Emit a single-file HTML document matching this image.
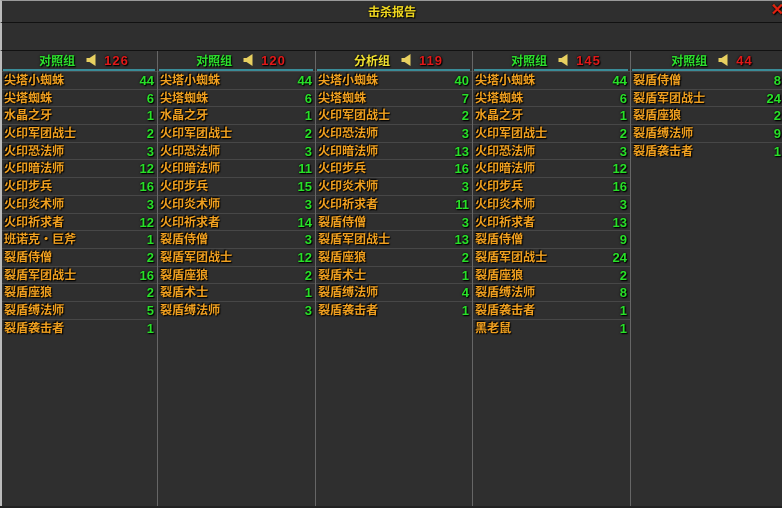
<!DOCTYPE html>
<html><head><meta charset="utf-8"><style>
*{margin:0;padding:0;box-sizing:border-box}
body{width:782px;height:508px;background:#2f2f2f;overflow:hidden;position:relative;font-family:"Liberation Sans","Noto Sans CJK SC",sans-serif;font-weight:bold;font-size:12px}
.t{position:absolute;left:0;top:0;width:782px;height:23px;border-top:1px solid #9a9a9a;border-left:2px solid #bbb;border-bottom:1px solid #111;text-align:center;line-height:22px;color:#f0d820;text-shadow:0 0 2px #000,1px 1px 1px #000,0.4px 0 0 #f0d820}
.x{position:absolute;right:-2px;top:1px;color:#e02010;font-size:16px;line-height:18px}
.b2{position:absolute;left:0;top:23px;width:782px;height:28px;border-left:2px solid #bbb;border-bottom:1px solid #111}
.lb{position:absolute;left:0;top:51px;width:2px;height:457px;background:#bbb}
.bb{position:absolute;left:0;top:506px;width:782px;height:2px;background:#222}
.col{position:absolute;top:51px;height:455px}
.sep{position:absolute;top:51px;width:1px;height:455px;background:#666}
.h{height:20px;border-bottom:2px solid #3a8c98;margin:0 2px 0 1px;text-align:center;line-height:20px;color:#2ee02e;text-shadow:0 0 2px #000,1px 1px 1px #000,0.5px 0 0 #2ee02e;font-size:12px;padding-left:10px}
.h.y{color:#f0e030;text-shadow:0 0 2px #000,1px 1px 1px #000,0.5px 0 0 #f0e030}
.h .n{color:#e01818;font-size:13px;margin-left:6px;letter-spacing:1px;text-shadow:0 0 2px #000,1px 1px 1px #000}
.h .s{display:inline-block;width:13px;height:12px;vertical-align:-1px;margin-left:10px}
.r{height:17.7px;line-height:17.7px;padding:0 3px 0 2px;display:flex;justify-content:space-between;border-top:1px solid #474747;color:#f0a020;text-shadow:0 0 2px #000,1px 1px 1px #000,-1px -1px 1px #000,0.5px 0 0 #f0a020}
.r:first-of-type{border-top:none}
.r b{color:#28e028;font-weight:bold;font-size:13px;text-shadow:0 0 2px #000,1px 1px 1px #000}
</style></head><body>
<div class="t">击杀报告<span class="x">✕</span></div>
<div class="b2"></div>
<div class="lb"></div>
<div class="sep" style="left:157px"></div>
<div class="sep" style="left:315px"></div>
<div class="sep" style="left:472px"></div>
<div class="sep" style="left:630px"></div>

<div class="col" style="left:2px;width:155px">
<div class="h">对照组<svg class="s" viewBox="0 0 12 12"><path d="M1 4h3l6-4v12l-6-4H1z" fill="#e8d060"/></svg><span class="n">126</span></div>
<div class="r">尖塔小蜘蛛<b>44</b></div><div class="r">尖塔蜘蛛<b>6</b></div><div class="r">水晶之牙<b>1</b></div><div class="r">火印军团战士<b>2</b></div><div class="r">火印恐法师<b>3</b></div><div class="r">火印暗法师<b>12</b></div><div class="r">火印步兵<b>16</b></div><div class="r">火印炎术师<b>3</b></div><div class="r">火印祈求者<b>12</b></div><div class="r">班诺克・巨斧<b>1</b></div><div class="r">裂盾侍僧<b>2</b></div><div class="r">裂盾军团战士<b>16</b></div><div class="r">裂盾座狼<b>2</b></div><div class="r">裂盾缚法师<b>5</b></div><div class="r">裂盾袭击者<b>1</b></div>
</div>

<div class="col" style="left:158px;width:157px">
<div class="h">对照组<svg class="s" viewBox="0 0 12 12"><path d="M1 4h3l6-4v12l-6-4H1z" fill="#e8d060"/></svg><span class="n">120</span></div>
<div class="r">尖塔小蜘蛛<b>44</b></div><div class="r">尖塔蜘蛛<b>6</b></div><div class="r">水晶之牙<b>1</b></div><div class="r">火印军团战士<b>2</b></div><div class="r">火印恐法师<b>3</b></div><div class="r">火印暗法师<b>11</b></div><div class="r">火印步兵<b>15</b></div><div class="r">火印炎术师<b>3</b></div><div class="r">火印祈求者<b>14</b></div><div class="r">裂盾侍僧<b>3</b></div><div class="r">裂盾军团战士<b>12</b></div><div class="r">裂盾座狼<b>2</b></div><div class="r">裂盾术士<b>1</b></div><div class="r">裂盾缚法师<b>3</b></div>
</div>

<div class="col" style="left:316px;width:156px">
<div class="h y">分析组<svg class="s" viewBox="0 0 12 12"><path d="M1 4h3l6-4v12l-6-4H1z" fill="#e8d060"/></svg><span class="n">119</span></div>
<div class="r">尖塔小蜘蛛<b>40</b></div><div class="r">尖塔蜘蛛<b>7</b></div><div class="r">火印军团战士<b>2</b></div><div class="r">火印恐法师<b>3</b></div><div class="r">火印暗法师<b>13</b></div><div class="r">火印步兵<b>16</b></div><div class="r">火印炎术师<b>3</b></div><div class="r">火印祈求者<b>11</b></div><div class="r">裂盾侍僧<b>3</b></div><div class="r">裂盾军团战士<b>13</b></div><div class="r">裂盾座狼<b>2</b></div><div class="r">裂盾术士<b>1</b></div><div class="r">裂盾缚法师<b>4</b></div><div class="r">裂盾袭击者<b>1</b></div>
</div>

<div class="col" style="left:473px;width:157px">
<div class="h">对照组<svg class="s" viewBox="0 0 12 12"><path d="M1 4h3l6-4v12l-6-4H1z" fill="#e8d060"/></svg><span class="n">145</span></div>
<div class="r">尖塔小蜘蛛<b>44</b></div><div class="r">尖塔蜘蛛<b>6</b></div><div class="r">水晶之牙<b>1</b></div><div class="r">火印军团战士<b>2</b></div><div class="r">火印恐法师<b>3</b></div><div class="r">火印暗法师<b>12</b></div><div class="r">火印步兵<b>16</b></div><div class="r">火印炎术师<b>3</b></div><div class="r">火印祈求者<b>13</b></div><div class="r">裂盾侍僧<b>9</b></div><div class="r">裂盾军团战士<b>24</b></div><div class="r">裂盾座狼<b>2</b></div><div class="r">裂盾缚法师<b>8</b></div><div class="r">裂盾袭击者<b>1</b></div><div class="r">黑老鼠<b>1</b></div>
</div>

<div class="col" style="left:631px;width:153px">
<div class="h">对照组<svg class="s" viewBox="0 0 12 12"><path d="M1 4h3l6-4v12l-6-4H1z" fill="#e8d060"/></svg><span class="n">44</span></div>
<div class="r">裂盾侍僧<b>8</b></div><div class="r">裂盾军团战士<b>24</b></div><div class="r">裂盾座狼<b>2</b></div><div class="r">裂盾缚法师<b>9</b></div><div class="r">裂盾袭击者<b>1</b></div>
</div>
<div class="bb"></div>
</body></html>
